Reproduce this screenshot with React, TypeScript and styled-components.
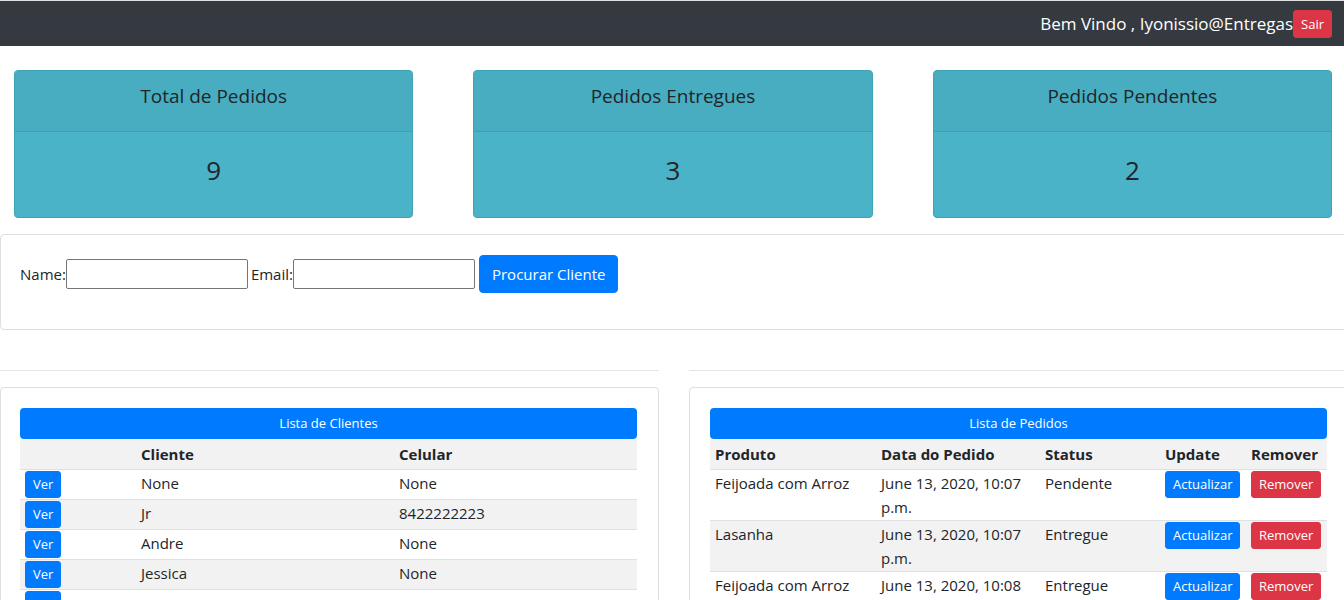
import React from "react";
import styled, { createGlobalStyle } from "styled-components";

const GlobalStyle = createGlobalStyle`
  html, body { margin: 0; padding: 0; background: #fff; overflow-x: hidden; }
  body {
    font-family: "Open Sans", "Noto Sans", Arial, sans-serif;
    font-size: 15px;
    line-height: 24px;
    color: #212529;
  }
  * { box-sizing: border-box; }
`;

const Page = styled.div`
  width: 1344px;
  overflow: hidden;
`;

const Navbar = styled.nav`
  height: 46px;
  background: #343a40;
  border-top: 1px solid #dfe1e3;
  display: flex;
  align-items: center;
  justify-content: flex-end;
  padding-right: 12px;
`;

const Brand = styled.span`
  color: #fff;
  font-size: 17px;
  line-height: 28px;
`;

const Btn = styled.button<{ $variant: "primary" | "danger"; $big?: boolean }>`
  font-family: inherit;
  display: inline-block;
  vertical-align: top;
  border: 1px solid ${(p) => (p.$variant === "danger" ? "#dc3545" : "#007bff")};
  background: ${(p) => (p.$variant === "danger" ? "#dc3545" : "#007bff")};
  color: #fff;
  border-radius: ${(p) => (p.$big ? "4px" : "3px")};
  font-size: ${(p) => (p.$big ? "15px" : "13px")};
  height: ${(p) => (p.$big ? "38px" : "27px")};
  line-height: ${(p) => (p.$big ? "36px" : "25px")};
  padding: ${(p) => (p.$big ? "0 12px" : "0 7px")};
  margin: 0;
  cursor: pointer;
`;

const SairBtn = styled(Btn)`
  height: 28px;
  line-height: 26px;
  padding: 0 7px;
`;

const StatGrid = styled.div`
  display: grid;
  grid-template-columns: repeat(3, 1fr);
  gap: 60px;
  margin: 24px 12px 0 14px;
`;

const StatCard = styled.div`
  border: 1px solid #3fa2b5;
  border-radius: 4px;
  background: #4bb3c7;
  overflow: hidden;
  text-align: center;
`;

const StatHeader = styled.div`
  height: 61px;
  padding-top: 13px;
  background: #48adc0;
  border-bottom: 1px solid #3fa0b3;
  font-size: 19px;
  line-height: 24px;
  font-weight: 500;
`;

const StatBody = styled.div`
  height: 85px;
  padding-top: 21px;
  font-size: 26px;
  line-height: 34px;
  font-weight: 500;
`;

const SearchCard = styled.div`
  width: 1348px;
  margin-top: 16px;
  border: 1px solid rgba(0, 0, 0, 0.125);
  border-radius: 4px;
  padding: 20px 20px 20px 19px;
`;

const SearchForm = styled.form`
  display: flex;
  align-items: center;
  margin: 0 0 16px;
  height: 38px;
`;

const Label = styled.label`
  font-size: 15px;
`;

const Input = styled.input`
  width: 182px;
  height: 30px;
  border: 1px solid #767676;
  border-radius: 2px;
  margin: 0 3px 0 0;
  font-family: inherit;
  font-size: 13px;
`;

const Columns = styled.div`
  display: grid;
  grid-template-columns: 659px 659px;
  gap: 30px;
  width: 1348px;
  margin-top: 40px;
`;

const Column = styled.div``;

const Rule = styled.hr`
  margin: 0 0 16px;
  border: 0;
  border-top: 1px solid rgba(0, 0, 0, 0.1);
`;

const ListCard = styled.div<{ $first?: boolean }>`
  border: 1px solid rgba(0, 0, 0, 0.125);
  border-radius: 4px;
  padding: ${(p) => (p.$first ? "20px 21px 20px 19px" : "20px")};
  height: 240px;
`;

const Caption = styled.div`
  height: 31px;
  line-height: 31px;
  background: #007bff;
  color: #fff;
  border-radius: 4px;
  text-align: center;
  font-size: 13px;
`;

const Table = styled.table`
  width: 100%;
  border-collapse: collapse;
  table-layout: fixed;
`;

const Th = styled.th<{ $w: number }>`
  width: ${(p) => p.$w}px;
  text-align: left;
  font-weight: 700;
  padding: 3px 5px;
  line-height: 24px;
  background: #f2f2f2;
  border-bottom: 1px solid #dee2e6;
  white-space: nowrap;
`;

const Tr = styled.tr`
  &:nth-child(even) { background: #f2f2f2; }
`;

const Td = styled.td`
  padding: 1px 5px;
  line-height: 24px;
  vertical-align: top;
  border-bottom: 1px solid #dee2e6;
`;

const Line = styled.span`
  display: block;
  white-space: nowrap;
`;

const clientes = [
  { nome: "None", cel: "None" },
  { nome: "Jr", cel: "8422222223" },
  { nome: "Andre", cel: "None" },
  { nome: "Jessica", cel: "None" },
  { nome: "", cel: "" },
];

const pedidos = [
  { produto: "Feijoada com Arroz", data: "June 13, 2020, 10:07", status: "Pendente" },
  { produto: "Lasanha", data: "June 13, 2020, 10:07", status: "Entregue" },
  { produto: "Feijoada com Arroz", data: "June 13, 2020, 10:08", status: "Entregue" },
];

const stats = [
  { title: "Total de Pedidos", value: 9 },
  { title: "Pedidos Entregues", value: 3 },
  { title: "Pedidos Pendentes", value: 2 },
];

export default function App() {
  return (
    <Page>
      <GlobalStyle />
      <Navbar>
        <Brand>Bem Vindo , Iyonissio@Entregas</Brand>
        <SairBtn $variant="danger">Sair</SairBtn>
      </Navbar>

      <StatGrid>
        {stats.map((s) => (
          <StatCard key={s.title}>
            <StatHeader>{s.title}</StatHeader>
            <StatBody>{s.value}</StatBody>
          </StatCard>
        ))}
      </StatGrid>

      <SearchCard>
        <SearchForm onSubmit={(e) => e.preventDefault()}>
          <Label htmlFor="name">Name:</Label>
          <Input id="name" type="text" />
          <Label htmlFor="email">Email:</Label>
          <Input id="email" type="text" />
          <Btn $variant="primary" $big type="submit" style={{ marginLeft: 1 }}>
            Procurar Cliente
          </Btn>
        </SearchForm>
      </SearchCard>

      <Columns>
        <Column>
          <Rule />
          <ListCard $first>
            <Caption>Lista de Clientes</Caption>
            <Table>
              <thead>
                <tr>
                  <Th $w={116}></Th>
                  <Th $w={258}>Cliente</Th>
                  <Th $w={243}>Celular</Th>
                </tr>
              </thead>
              <tbody>
                {clientes.map((c, i) => (
                  <Tr key={i}>
                    <Td>
                      <Btn $variant="primary">Ver</Btn>
                    </Td>
                    <Td>{c.nome}</Td>
                    <Td>{c.cel}</Td>
                  </Tr>
                ))}
              </tbody>
            </Table>
          </ListCard>
        </Column>
        <Column>
          <Rule />
          <ListCard>
            <Caption>Lista de Pedidos</Caption>
            <Table>
              <thead>
                <tr>
                  <Th $w={166}>Produto</Th>
                  <Th $w={164}>Data do Pedido</Th>
                  <Th $w={120}>Status</Th>
                  <Th $w={86}>Update</Th>
                  <Th $w={81}>Remover</Th>
                </tr>
              </thead>
              <tbody>
                {pedidos.map((p, i) => (
                  <Tr key={i}>
                    <Td>{p.produto}</Td>
                    <Td>
                      <Line>{p.data}</Line>
                      <Line>p.m.</Line>
                    </Td>
                    <Td>{p.status}</Td>
                    <Td>
                      <Btn $variant="primary">Actualizar</Btn>
                    </Td>
                    <Td>
                      <Btn $variant="danger">Remover</Btn>
                    </Td>
                  </Tr>
                ))}
              </tbody>
            </Table>
          </ListCard>
        </Column>
      </Columns>
    </Page>
  );
}
